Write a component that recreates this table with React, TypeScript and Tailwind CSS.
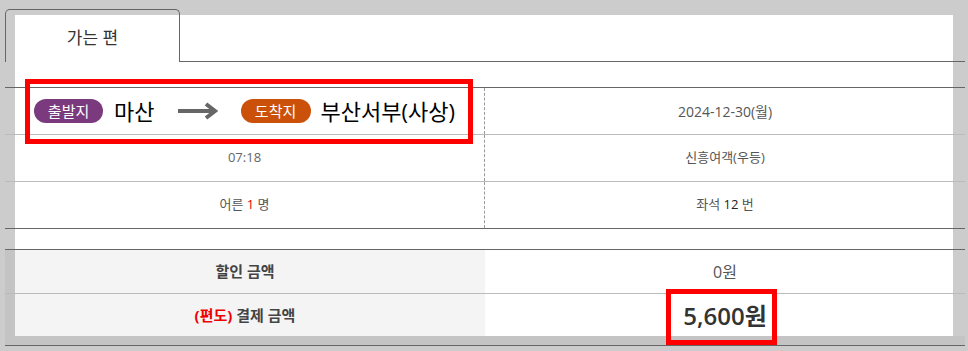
const font = { fontFamily: '"Open Sans", "Noto Sans CJK KR", sans-serif' };

function Badge({ label, tone }: { label: string; tone: 'from' | 'to' }) {
  return (
    <span
      className={
        tone === 'from'
          ? 'inline-flex h-[24px] w-[69px] items-center justify-center rounded-full bg-[#7a3a7d] text-[15px] text-white'
          : 'inline-flex h-[24px] w-[70px] items-center justify-center rounded-full bg-[#cb510a] text-[15px] text-white'
      }
    >
      {label}
    </span>
  );
}

function Arrow() {
  return (
    <svg width="40" height="18" viewBox="0 0 40 18" className="shrink-0">
      <line x1="0" y1="9" x2="37" y2="9" stroke="#666" strokeWidth="4" />
      <polyline points="28,2 37,9 28,16" fill="none" stroke="#666" strokeWidth="4" />
    </svg>
  );
}

export default function App() {
  return (
    <div className="relative h-[351px] w-[968px] overflow-hidden bg-[#cccccc] pl-[15px] pt-[15px]" style={font}>
      <div className="flex h-[321px] w-[938px] flex-col bg-white">
        {/* tab */}
        <div className="-ml-[10px] -mr-[12px] -mt-[6px] flex h-[53px] shrink-0">
          <div className="flex w-[175px] items-center justify-center rounded-t-[5px] border border-b-0 border-[#666] pt-[3px] text-[17px] text-[#333]">
            가는 편
          </div>
          <div className="flex-1 border-b border-[#666]" />
        </div>

        <div className="h-[25px] shrink-0" />

        {/* trip info */}
        <div className="-ml-[10px] -mr-[12px] shrink-0 border-t border-[#666]">
          <div className="flex h-[47px] border-b border-[#bbb]">
            <div className="flex w-[480px] items-center justify-center border-r border-dashed border-[#999]">
              <Badge label="출발지" tone="from" />
              <span className="ml-[11px] text-[22px] text-black">마산</span>
              <span className="mx-[23px] flex">
                <Arrow />
              </span>
              <Badge label="도착지" tone="to" />
              <span className="ml-[10px] text-[22px] text-black">부산서부(사상)</span>
            </div>
            <div className="flex flex-1 items-center justify-center text-[14px] text-[#555]">2024-12-30(월)</div>
          </div>
          <div className="flex h-[47px] border-b border-[#bbb]">
            <div className="flex w-[480px] items-center justify-center border-r border-dashed border-[#999] text-[13px] text-[#666]">
              07:18
            </div>
            <div className="flex flex-1 items-center justify-center text-[13px] text-[#555]">신흥여객(우등)</div>
          </div>
          <div className="flex h-[47px] border-b border-[#666]">
            <div className="flex w-[480px] items-center justify-center border-r border-dashed border-[#999] text-[13px] text-[#555]">
              어른&nbsp;<span className="text-[#e00]">1</span>&nbsp;명
            </div>
            <div className="flex flex-1 items-center justify-center text-[13px] text-[#555]">
              좌석&nbsp;<span className="text-[#222]">12</span>&nbsp;번
            </div>
          </div>
        </div>

        <div className="h-[20px] shrink-0" />

        {/* payment */}
        <div className="-ml-[10px] -mr-[12px] shrink-0 border-y border-[#666]">
          <div className="flex h-[44px] border-b border-[#bbb]">
            <div className="w-[10px] bg-[#c4c4c4]" />
            <div className="flex w-[470px] items-center justify-center bg-[#f4f4f4] text-[15px] font-bold text-[#444]">
              <span className="-ml-[10px]">할인 금액</span>
            </div>
            <div className="flex flex-1 items-center justify-center bg-white text-[16px] text-[#555]">
              <span className="-mr-[12px]">0원</span>
            </div>
            <div className="w-[12px]" />
          </div>
          <div className="flex h-[42px]">
            <div className="w-[10px] bg-[#c4c4c4]" />
            <div className="flex w-[470px] items-center justify-center bg-[#f4f4f4] text-[15px] font-bold text-[#444]">
              <span className="-ml-[10px]">
                <span className="text-[#e00]">(편도)</span> 결제 금액
              </span>
            </div>
            <div className="flex flex-1 items-center justify-center bg-white pt-[2px] text-[24px] font-semibold text-[#333]">
              <span className="-mr-[12px]">5,600원</span>
            </div>
            <div className="w-[12px]" />
          </div>
          <div className="h-[9px] bg-[#c4c4c4]" />
        </div>
      </div>

      {/* annotation boxes */}
      <div className="absolute left-[25px] top-[79px] h-[65px] w-[448px] border-[5px] border-[#ff0000]" />
      <div className="absolute left-[666px] top-[289px] h-[56px] w-[111px] border-[5px] border-[#ff0000]" />
    </div>
  );
}
